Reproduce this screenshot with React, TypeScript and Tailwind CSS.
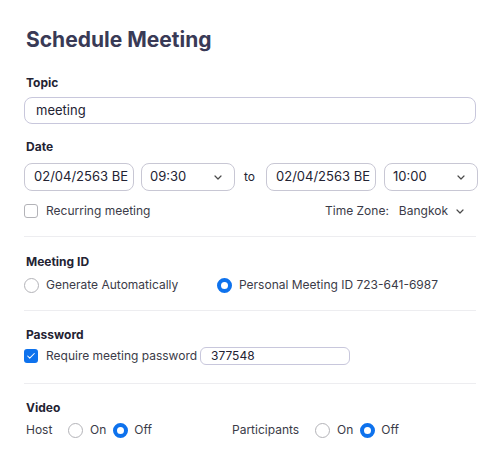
import { Check } from 'lucide-react';

const font = { fontFamily: 'Inter, "Liberation Sans", sans-serif' };

function Chevron() {
  return (
    <svg width="8" height="5" viewBox="0 0 8 5" className="block shrink-0">
      <path d="M1 1l3 3 3-3" fill="none" stroke="#4a4a4a" strokeWidth="1.2" strokeLinecap="round" strokeLinejoin="round" />
    </svg>
  );
}

function Radio({ on, className = '' }: { on?: boolean; className?: string }) {
  return on ? (
    <span className={`block w-[15px] h-[15px] shrink-0 rounded-full border-[4px] border-[#0e72ed] bg-white ${className}`} />
  ) : (
    <span className={`block w-[15px] h-[15px] shrink-0 rounded-full border border-[#b3b3b8] bg-white ${className}`} />
  );
}

function Label({ children, className = '' }: { children: React.ReactNode; className?: string }) {
  return (
    <div className={`h-4 leading-4 text-[12px] font-bold text-[#232333] ${className}`}>{children}</div>
  );
}

function Divider({ className = '' }: { className?: string }) {
  return <div className={`h-px bg-[#ededf0] ${className}`} />;
}

function DateBox({ className = '' }: { className?: string }) {
  return (
    <div
      className={`h-[28px] w-[110px] shrink-0 flex items-center pl-[9px] rounded-[8px] border border-[#c8c7d4] text-[13px] text-[#232333] overflow-hidden whitespace-nowrap ${className}`}
    >
      02/04/2563 BE
    </div>
  );
}

function TimeBox({ value, className = '' }: { value: string; className?: string }) {
  return (
    <div
      className={`h-[28px] w-[94px] shrink-0 flex items-center justify-between pl-[8px] pr-[12px] rounded-[8px] border border-[#c8c7d4] text-[13px] text-[#232333] ${className}`}
    >
      <span>{value}</span>
      <Chevron />
    </div>
  );
}

export default function App() {
  return (
    <div className="w-[500px] h-[453px] bg-white px-6 pt-[26px] text-[#3b3b48] whitespace-nowrap" style={font}>
      <h1 className="h-[28px] leading-[28px] pl-[2px] text-[21px] font-bold text-[#393a56]">
        Schedule Meeting
      </h1>

      <Label className="mt-[21px] pl-[2px]">Topic</Label>
      <div className="mt-[6px] h-[27px] flex items-center pl-[11px] rounded-[8px] border border-[#c8c7dc] text-[13px] text-[#232333]">
        meeting
      </div>

      <Label className="mt-[15px] pl-[2px]">Date</Label>
      <div className="mt-[8px] flex items-center">
        <DateBox />
        <TimeBox value="09:30" className="ml-[7px]" />
        <span className="ml-[9px] text-[12px] text-[#232333]">to</span>
        <DateBox className="ml-[11px] w-[109px]" />
        <TimeBox value="10:00" className="ml-[8px]" />
      </div>

      <div className="mt-[12px] h-4 flex items-center text-[12px]">
        <span className="w-[14px] h-[14px] shrink-0 rounded-[3px] border border-[#b3b3b8] bg-white" />
        <span className="ml-[8px]">Recurring meeting</span>
        <span className="ml-auto">Time Zone:</span>
        <span className="ml-[10px]">Bangkok</span>
        <span className="ml-[8px] mr-[12px]">
          <Chevron />
        </span>
      </div>

      <Divider className="mt-[17px]" />

      <Label className="mt-[17px] pl-[2px]">Meeting ID</Label>
      <div className="mt-[7px] h-4 flex items-center text-[12px]">
        <div className="w-[193px] flex items-center">
          <Radio />
          <span className="ml-[7px]">Generate Automatically</span>
        </div>
        <Radio on />
        <span className="ml-[7px]">Personal Meeting ID 723-641-6987</span>
      </div>

      <Divider className="mt-[17px]" />

      <Label className="mt-[16px] pl-[2px]">Password</Label>
      <div className="mt-[4px] h-[18px] flex items-center text-[12px]">
        <div className="w-[176px] flex items-center">
          <span className="w-[14px] h-[14px] shrink-0 rounded-[3px] bg-[#0e72ed] flex items-center justify-center">
            <Check size={10} strokeWidth={2.5} color="white" />
          </span>
          <span className="ml-[8px]">Require meeting password</span>
        </div>
        <div className="w-[150px] h-[18px] flex items-center pl-[10px] rounded-[6px] border border-[#c8c7dc] text-[12px] text-[#232333]">
          377548
        </div>
      </div>

      <Divider className="mt-[18px]" />

      <Label className="mt-[16px] pl-[2px]">Video</Label>
      <div className="mt-[6px] h-4 flex items-center text-[12px]">
        <div className="w-[208px] flex items-center">
          <span className="w-[44px] pl-[2px]">Host</span>
          <Radio />
          <span className="ml-[7px]">On</span>
          <Radio on className="ml-[7px]" />
          <span className="ml-[6px]">Off</span>
        </div>
        <span className="w-[83px]">Participants</span>
        <Radio />
        <span className="ml-[7px]">On</span>
        <Radio on className="ml-[7px]" />
        <span className="ml-[6px]">Off</span>
      </div>
    </div>
  );
}
